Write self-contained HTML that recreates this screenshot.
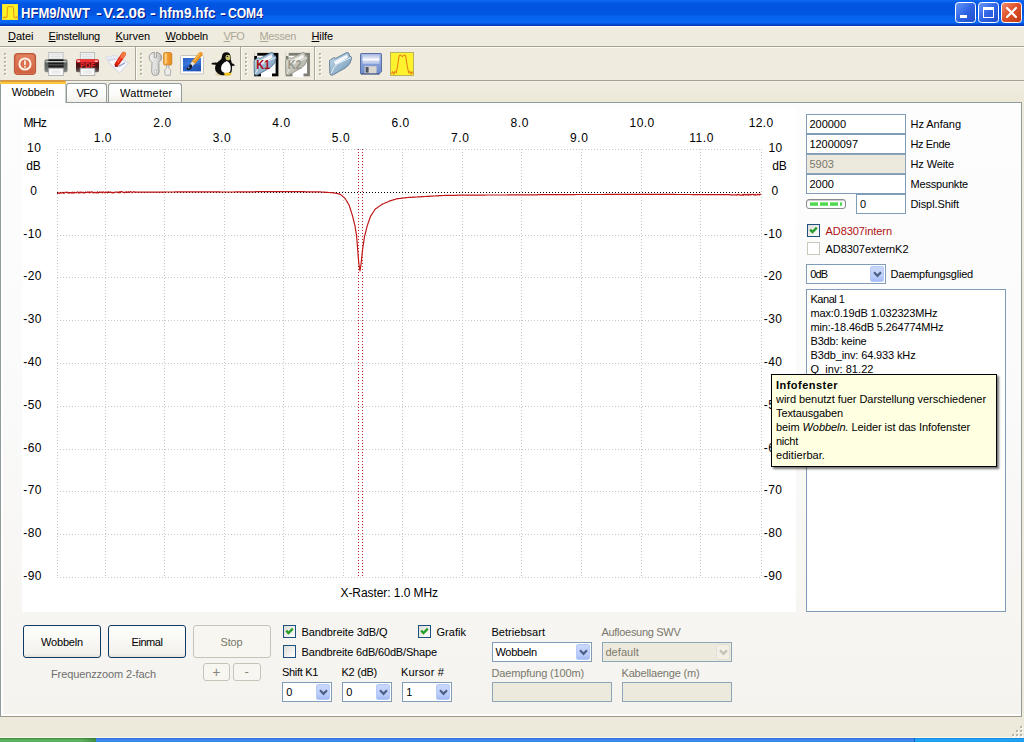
<!DOCTYPE html>
<html lang="de"><head><meta charset="utf-8"><title>HFM9/NWT</title>
<style>
html,body{margin:0;padding:0;}
body{width:1024px;height:742px;overflow:hidden;background:#ece9d8;font-family:'Liberation Sans',sans-serif;font-size:11px;}
#root{position:relative;width:1024px;height:742px;overflow:hidden;background:#edeadb;}
#root div,#root span,#root svg{position:absolute;box-sizing:border-box;}
.t{white-space:pre;line-height:14px;height:14px;}
.t u{text-decoration:underline;text-underline-offset:1px;}
#title{left:0;top:0;width:1024px;height:26px;background:linear-gradient(to bottom,#1369f4 0px,#0860ee 1.5px,#0257e4 3.5px,#0054e0 6px,#0055e2 14px,#0663f0 16.5px,#0766f3 22.5px,#0350d8 24px,#0038b4 25.5px,#0038b4 26px);}
.cb{width:13px;height:13px;border:1px solid #1c5180;background:linear-gradient(135deg,#dcdcd7,#fff);}
.cb.dis{border-color:#cac8bb;background:#fff;}
.edit{border:1px solid #7f9db9;background:#fff;}
.edit.dis{background:#ece9dd;border-color:#8ea4bb;}
.btn{border:1px solid #0f3a66;border-radius:3px;background:linear-gradient(to bottom,#fefefd 0%,#f8f7f3 50%,#f3f2ec 88%,#e6e3da 100%);}
.btn.dis{border-color:#c6c4b8;background:#f7f6f0;}
.arrow{border-radius:2px;background:linear-gradient(to bottom,#c9d8fc,#b9ccfb 70%,#a4baf4);border:1px solid #b7caf7;}

</style></head>
<body>
<div id="root">
<div id="title"></div>
<span class="t" style="left:20.8px;top:5.5px;font-size:14px;color:#fff;transform-origin:0 50%;transform:scaleX(0.932);font-weight:bold;text-shadow:1px 1px 0 #0a1883;">HFM9/NWT</span>
<span class="t" style="left:95.5px;top:5.5px;font-size:14px;color:#fff;transform-origin:0 50%;transform:scaleX(1.241);font-weight:bold;text-shadow:1px 1px 0 #0a1883;">-</span>
<span class="t" style="left:102.8px;top:5.5px;font-size:14px;color:#fff;transform-origin:0 50%;transform:scaleX(1.084);font-weight:bold;text-shadow:1px 1px 0 #0a1883;">V.2.06</span>
<span class="t" style="left:150.3px;top:5.5px;font-size:14px;color:#fff;transform-origin:0 50%;transform:scaleX(1.263);font-weight:bold;text-shadow:1px 1px 0 #0a1883;">-</span>
<span class="t" style="left:158.5px;top:5.5px;font-size:14px;color:#fff;transform-origin:0 50%;transform:scaleX(0.970);font-weight:bold;text-shadow:1px 1px 0 #0a1883;">hfm9.hfc</span>
<span class="t" style="left:220px;top:5.5px;font-size:14px;color:#fff;transform-origin:0 50%;transform:scaleX(1.263);font-weight:bold;text-shadow:1px 1px 0 #0a1883;">-</span>
<span class="t" style="left:228.2px;top:5.5px;font-size:14px;color:#fff;transform-origin:0 50%;transform:scaleX(0.863);font-weight:bold;text-shadow:1px 1px 0 #0a1883;">COM4</span>
<svg style="left:2px;top:4px" width="16" height="16" viewBox="0 0 16 16"><rect width="16" height="16" fill="#fdf224"/><rect x=".4" y=".4" width="15.2" height="15.2" fill="none" stroke="#f4dc3a" stroke-width=".8"/><path d="M1 14.2 L2.2 12.6 L3.2 14.2 L4.2 12.8 L5 13.6 L5.4 3.4 Q5.8 2.3 6.8 2.6 L8.5 2.9 L10.2 2.6 Q11.2 2.3 11.5 3.4 L12 13.6 L12.8 12.8 L13.8 14.2 L14.8 12.6 L15.4 14.2" fill="none" stroke="#e8921c" stroke-width="1"/></svg>
<svg style="left:955px;top:2px" width="21" height="21" viewBox="0 0 21 21"><defs><linearGradient id="gmin" x1="0" y1="0" x2="1" y2="1"><stop offset="0" stop-color="#6a9afa"/><stop offset=".5" stop-color="#2f64e6"/><stop offset="1" stop-color="#1f4cc8"/></linearGradient></defs><rect x=".5" y=".5" width="20" height="20" rx="3" fill="url(#gmin)" stroke="#fff" stroke-width="1"/><rect x="5" y="13" width="7" height="3" fill="#fff"/></svg><svg style="left:978px;top:2px" width="21" height="21" viewBox="0 0 21 21"><defs><linearGradient id="gmax" x1="0" y1="0" x2="1" y2="1"><stop offset="0" stop-color="#6a9afa"/><stop offset=".5" stop-color="#2f64e6"/><stop offset="1" stop-color="#1f4cc8"/></linearGradient></defs><rect x=".5" y=".5" width="20" height="20" rx="3" fill="url(#gmax)" stroke="#fff" stroke-width="1"/><rect x="5.5" y="6.5" width="10" height="9" fill="none" stroke="#fff" stroke-width="1"/><rect x="5" y="5" width="11" height="3" fill="#fff"/></svg><svg style="left:1001px;top:2px" width="21" height="21" viewBox="0 0 21 21"><defs><linearGradient id="gc" x1="0" y1="0" x2="1" y2="1"><stop offset="0" stop-color="#ee9274"/><stop offset=".45" stop-color="#e0532c"/><stop offset="1" stop-color="#bd3610"/></linearGradient></defs><rect x=".5" y=".5" width="20" height="20" rx="3" fill="url(#gc)" stroke="#fff" stroke-width="1"/><path d="M6 6 L15 15 M15 6 L6 15" stroke="#fff" stroke-width="2.2" stroke-linecap="round"/></svg>
<div style="left:0px;top:26px;width:1024px;height:20px;background:#efebde;border-top:1px solid #fff;"></div>
<span class="t" style="left:8px;top:29px;font-size:11px;color:#000;letter-spacing:-0.04px;"><u>D</u>atei</span>
<span class="t" style="left:48.5px;top:29px;font-size:11px;color:#000;letter-spacing:-0.21px;"><u>E</u>instellung</span>
<span class="t" style="left:115.5px;top:29px;font-size:11px;color:#000;letter-spacing:-0.06px;"><u>K</u>urven</span>
<span class="t" style="left:165.5px;top:29px;font-size:11px;color:#000;letter-spacing:-0.10px;"><u>W</u>obbeln</span>
<span class="t" style="left:223.5px;top:29px;font-size:11px;color:#aca899;letter-spacing:-0.71px;"><u>V</u>FO</span>
<span class="t" style="left:259.5px;top:29px;font-size:11px;color:#aca899;letter-spacing:-0.34px;"><u>M</u>essen</span>
<span class="t" style="left:311.5px;top:29px;font-size:11px;color:#000;letter-spacing:-0.10px;"><u>H</u>ilfe</span>
<div style="left:0px;top:46px;width:1024px;height:1px;background:#a5a293;"></div>
<div style="left:0px;top:47px;width:1024px;height:33px;background:#efebde;border-top:1px solid #fbfaf4;"></div>
<div style="left:0px;top:80px;width:1024px;height:1px;background:#a5a293;"></div>
<svg style="left:0;top:0" width="430" height="82" viewBox="0 0 430 82"><defs><linearGradient id="pw" x1="0" y1="0" x2="0" y2="1"><stop offset="0" stop-color="#e0805e"/><stop offset="1" stop-color="#cf5f40"/></linearGradient><linearGradient id="prb" x1="0" y1="0" x2="0" y2="1"><stop offset="0" stop-color="#8a8c8a"/><stop offset=".3" stop-color="#5c5f5d"/><stop offset=".7" stop-color="#6c6f6d"/><stop offset="1" stop-color="#8a8d8a"/></linearGradient><linearGradient id="prr" x1="0" y1="0" x2="0" y2="1"><stop offset="0" stop-color="#c01820"/><stop offset=".3" stop-color="#5a0c10"/><stop offset=".6" stop-color="#4a1416"/><stop offset="1" stop-color="#6a6a6a"/></linearGradient><linearGradient id="fo" x1="0" y1="0" x2="1" y2="1"><stop offset="0" stop-color="#c6dbea"/><stop offset="1" stop-color="#6f95b6"/></linearGradient><linearGradient id="fog" x1="0" y1="0" x2="1" y2="1"><stop offset="0" stop-color="#e2e1d8"/><stop offset="1" stop-color="#a9a89d"/></linearGradient><linearGradient id="fl" x1="0" y1="0" x2="0" y2="1"><stop offset="0" stop-color="#9db4e6"/><stop offset="1" stop-color="#6c8acb"/></linearGradient><linearGradient id="pic" x1="0" y1="0" x2="1" y2="1"><stop offset="0" stop-color="#2a5fc6"/><stop offset=".5" stop-color="#3f7fe0"/><stop offset="1" stop-color="#1c4aa8"/></linearGradient><linearGradient id="og" x1="0" y1="0" x2="1" y2="0"><stop offset="0" stop-color="#f9b44a"/><stop offset="1" stop-color="#e8861a"/></linearGradient><linearGradient id="wr" x1="0" y1="0" x2="1" y2="0"><stop offset="0" stop-color="#f2f2f0"/><stop offset=".6" stop-color="#dcdcda"/><stop offset="1" stop-color="#b4b4b2"/></linearGradient><linearGradient id="fll" x1="0" y1="0" x2="0" y2="1"><stop offset="0" stop-color="#aebde0"/><stop offset=".45" stop-color="#e6ebf8"/><stop offset=".7" stop-color="#c9d4ee"/><stop offset="1" stop-color="#b7c6ea"/></linearGradient></defs><rect x="4.9" y="53.9" width="1.8" height="1.8" fill="#fff"/><rect x="4" y="53" width="1.8" height="1.8" fill="#aeab9a"/><rect x="4.9" y="57.9" width="1.8" height="1.8" fill="#fff"/><rect x="4" y="57" width="1.8" height="1.8" fill="#aeab9a"/><rect x="4.9" y="61.9" width="1.8" height="1.8" fill="#fff"/><rect x="4" y="61" width="1.8" height="1.8" fill="#aeab9a"/><rect x="4.9" y="65.9" width="1.8" height="1.8" fill="#fff"/><rect x="4" y="65" width="1.8" height="1.8" fill="#aeab9a"/><rect x="4.9" y="69.9" width="1.8" height="1.8" fill="#fff"/><rect x="4" y="69" width="1.8" height="1.8" fill="#aeab9a"/><rect x="4.9" y="73.9" width="1.8" height="1.8" fill="#fff"/><rect x="4" y="73" width="1.8" height="1.8" fill="#aeab9a"/><rect x="140.9" y="53.9" width="1.8" height="1.8" fill="#fff"/><rect x="140" y="53" width="1.8" height="1.8" fill="#aeab9a"/><rect x="140.9" y="57.9" width="1.8" height="1.8" fill="#fff"/><rect x="140" y="57" width="1.8" height="1.8" fill="#aeab9a"/><rect x="140.9" y="61.9" width="1.8" height="1.8" fill="#fff"/><rect x="140" y="61" width="1.8" height="1.8" fill="#aeab9a"/><rect x="140.9" y="65.9" width="1.8" height="1.8" fill="#fff"/><rect x="140" y="65" width="1.8" height="1.8" fill="#aeab9a"/><rect x="140.9" y="69.9" width="1.8" height="1.8" fill="#fff"/><rect x="140" y="69" width="1.8" height="1.8" fill="#aeab9a"/><rect x="140.9" y="73.9" width="1.8" height="1.8" fill="#fff"/><rect x="140" y="73" width="1.8" height="1.8" fill="#aeab9a"/><rect x="245.9" y="53.9" width="1.8" height="1.8" fill="#fff"/><rect x="245" y="53" width="1.8" height="1.8" fill="#aeab9a"/><rect x="245.9" y="57.9" width="1.8" height="1.8" fill="#fff"/><rect x="245" y="57" width="1.8" height="1.8" fill="#aeab9a"/><rect x="245.9" y="61.9" width="1.8" height="1.8" fill="#fff"/><rect x="245" y="61" width="1.8" height="1.8" fill="#aeab9a"/><rect x="245.9" y="65.9" width="1.8" height="1.8" fill="#fff"/><rect x="245" y="65" width="1.8" height="1.8" fill="#aeab9a"/><rect x="245.9" y="69.9" width="1.8" height="1.8" fill="#fff"/><rect x="245" y="69" width="1.8" height="1.8" fill="#aeab9a"/><rect x="245.9" y="73.9" width="1.8" height="1.8" fill="#fff"/><rect x="245" y="73" width="1.8" height="1.8" fill="#aeab9a"/><rect x="319.9" y="53.9" width="1.8" height="1.8" fill="#fff"/><rect x="319" y="53" width="1.8" height="1.8" fill="#aeab9a"/><rect x="319.9" y="57.9" width="1.8" height="1.8" fill="#fff"/><rect x="319" y="57" width="1.8" height="1.8" fill="#aeab9a"/><rect x="319.9" y="61.9" width="1.8" height="1.8" fill="#fff"/><rect x="319" y="61" width="1.8" height="1.8" fill="#aeab9a"/><rect x="319.9" y="65.9" width="1.8" height="1.8" fill="#fff"/><rect x="319" y="65" width="1.8" height="1.8" fill="#aeab9a"/><rect x="319.9" y="69.9" width="1.8" height="1.8" fill="#fff"/><rect x="319" y="69" width="1.8" height="1.8" fill="#aeab9a"/><rect x="319.9" y="73.9" width="1.8" height="1.8" fill="#fff"/><rect x="319" y="73" width="1.8" height="1.8" fill="#aeab9a"/><rect x="135" y="47" width="1" height="33" fill="#aca899"/><rect x="136" y="47" width="1" height="33" fill="#fbfaf5"/><rect x="240" y="47" width="1" height="33" fill="#aca899"/><rect x="241" y="47" width="1" height="33" fill="#fbfaf5"/><rect x="314" y="47" width="1" height="33" fill="#aca899"/><rect x="315" y="47" width="1" height="33" fill="#fbfaf5"/><rect x="14.5" y="53.5" width="21" height="21" rx="3.5" fill="#d9714f" stroke="#b8583c" stroke-width="1.2"/><rect x="16" y="55" width="18" height="18" rx="2.5" fill="url(#pw)"/><circle cx="25" cy="64" r="5.6" fill="#d96f4e" stroke="#fff1e4" stroke-width="2"/><rect x="24.1" y="60.3" width="1.8" height="5" rx=".7" fill="#fff1e4"/><rect x="24.1" y="66" width="1.8" height="1.7" rx=".6" fill="#fff1e4"/><rect x="48.8" y="52.4" width="14.2" height="9" fill="#eff0f2" stroke="#b4b4b4" stroke-width=".8"/><path d="M50.8 54.6h10M50.8 56.6h10M50.8 58.6h10" stroke="#d4d6da" stroke-width=".7"/><rect x="44.5" y="59.2" width="23" height="13" rx="1.6" fill="url(#prb)"/><rect x="48.5" y="59.4" width="15" height="1.6" fill="#101110"/><rect x="45.5" y="61" width="21" height="1.3" fill="#c4c6c4"/><rect x="48.3" y="62.6" width="15.4" height="5" fill="#1a1c1b"/><rect x="48.3" y="64.4" width="15.4" height=".9" fill="#6a6c6a"/><rect x="48.7" y="68.2" width="14.6" height="7.2" fill="#fafafa" stroke="#a4a4a4" stroke-width=".8"/><path d="M51.7 71h8.6M51.7 73h8.6" stroke="#d8d8dc" stroke-width=".8"/><rect x="80.3" y="52.4" width="14.2" height="9" fill="#eff0f2" stroke="#b4b4b4" stroke-width=".8"/><path d="M82.3 54.6h10M82.3 56.6h10M82.3 58.6h10" stroke="#d4d6da" stroke-width=".7"/><rect x="76" y="59.2" width="23" height="13" rx="1.6" fill="url(#prr)"/><rect x="76.5" y="59.6" width="22" height="2.8" rx="1" fill="#f23434"/><rect x="77.1" y="60.4" width="3" height="1.4" fill="#ffd0d0"/><rect x="94.9" y="60.4" width="3" height="1.4" fill="#ffd0d0"/><text x="80" y="68.2" font-family="'Liberation Sans',sans-serif" font-weight="bold" font-size="7.6" fill="#f02a2a" textLength="15" lengthAdjust="spacingAndGlyphs">PDF</text><rect x="80.2" y="68.2" width="14.6" height="7.2" fill="#fafafa" stroke="#a4a4a4" stroke-width=".8"/><path d="M83.2 71h8.6M83.2 73h8.6" stroke="#d8d8dc" stroke-width=".8"/><path d="M105.4 57.2 L115 55.4 L125.6 61.6 L115.6 69.8 Z" fill="#eef0f8" stroke="#d3d6e2" stroke-width=".8"/><path d="M107.5 61 L119.6 58.4 L128.6 63 L119.6 73 Z" fill="#f7f8fe" stroke="#c9cde0" stroke-width=".8"/><path d="M108.6 58.4l2 2.6M111 57.8l2 2.6M113.4 57.4l2 2.6" stroke="#c6cadb" stroke-width=".9"/><path d="M123.8 54 L116.8 64.2" stroke="#df2412" stroke-width="4.4" stroke-linecap="round"/><path d="M124.2 53.6 L122.2 56.6" stroke="#f2803e" stroke-width="3.6" stroke-linecap="round"/><path d="M122.6 55.2 L118 62" stroke="#ff6a50" stroke-width="1.1" stroke-linecap="round"/><path d="M114.6 64 L115 67 L118.6 66.4 Z" fill="#8c1a12"/><path d="M119.4 66.2 L124.4 63.2" stroke="#9aa6c8" stroke-width="1.5" stroke-linecap="round"/><path d="M154.4 52.3 Q149.2 53.2 149.2 57.6 Q149.4 60.8 152 62.4 L151.7 72 Q151.8 75.5 155.4 75.5 Q159 75.5 159.1 72 L158.8 62.4 Q161.4 60.8 161.6 57.6 Q161.6 53.2 156.4 52.3 L156.6 57.2 Q155.4 58.2 154.2 57.2 Z" fill="url(#wr)" stroke="#8a8a88" stroke-width=".8"/><ellipse cx="155.4" cy="71.4" rx="1.2" ry="1.7" fill="#fafafa" stroke="#8d8d8b" stroke-width=".5"/><rect x="163.5" y="52.5" width="8.3" height="12.6" rx="1.6" fill="url(#og)" stroke="#c4781e" stroke-width=".7"/><rect x="165" y="53.6" width="1.8" height="10" rx=".9" fill="#fbcf80"/><path d="M166.7 65.2 L168.7 65.2 L168.8 68.2 L170.8 70 L170.2 75.3 L165.2 75.3 L164.6 70 L166.6 68.2 Z" fill="#ececea" stroke="#979795" stroke-width=".7"/><rect x="180.5" y="55.5" width="23" height="18.5" rx="1" fill="#fdfdfd" stroke="#bfbfba" stroke-width=".9"/><rect x="183" y="58" width="18" height="13.2" fill="url(#pic)"/><path d="M183 67 Q190 62 201 65.5 L201 71.2 L183 71.2 Z" fill="#2255ba" opacity=".65"/><path d="M200.6 54.2 L193.4 62.6" stroke="#e8921c" stroke-width="4.2" stroke-linecap="round"/><path d="M200.2 53.6 L194.2 60.6" stroke="#f8c062" stroke-width="1.2" stroke-linecap="round"/><path d="M193.6 62.4 L191 65.6" stroke="#e2e2e2" stroke-width="3.2"/><path d="M192 65 Q192.6 69.4 188.6 70 Q186.2 70 186.8 67.8 Q189.4 67.6 190 64 Z" fill="#161c2a"/><circle cx="188.8" cy="67.8" r=".8" fill="#8fa8d8"/><ellipse cx="222.5" cy="74.4" rx="7.5" ry="1.6" fill="#d9c68a" opacity=".7"/><path d="M226.4 52.2 Q230.6 52.4 230.6 57 Q230.6 60 231.6 62 Q232.6 66 231.8 71 L230.6 73.6 Q226 75.6 221 75 Q215.6 73.6 215 68.6 Q214.8 63.6 219.6 60.4 Q222 58.6 222 56.4 Q222.4 52.2 226.4 52.2 Z" fill="#0c0c0c"/><path d="M211.6 63 Q216 61.8 220 63.4 L218.6 65.8 Q214.6 64.4 211.8 64.6 Z" fill="#0c0c0c"/><path d="M230.8 63 Q233.8 63.4 235.2 65.4 Q233.4 65.6 231.4 66 Z" fill="#0c0c0c"/><path d="M226.8 61 Q230.4 62.6 230.8 68 Q230.8 72.6 227.4 73.4 Q221.4 73.4 221 68.6 Q220.8 63.6 226.8 61 Z" fill="#fbfbfb"/><path d="M226 55.2 Q228.4 54.2 230 55.6 L230.2 59.4 Q228 61 225.8 59.6 Q224.8 57.2 226 55.2 Z" fill="#c9c466"/><circle cx="227.4" cy="56.4" r=".7" fill="#222"/><path d="M223.6 73.6 Q227.6 71.6 231.4 73 Q231.6 75.4 228.2 75.8 Q224.6 76 223.6 73.6 Z" fill="#f1c11c"/><rect x="255.6" y="54.3" width="21.4" height="20.6" fill="#fff" stroke="#050505" stroke-width="2.8"/><rect x="261" y="70" width="11" height="7" fill="#fff"/><rect x="254.2" y="52" width="3" height="4" fill="#efebde"/><g transform="translate(-75.5 0)"><path d="M329.5 60.5 L333.5 57.8 L336 58.2 L346.5 52.6 Q349 52.2 349.2 54.2 L349.6 56 Q351.6 56.2 351.6 58.4 Q350.5 64.5 346 67.5 L332.5 75.2 Q330 75.8 329.8 73 Z" fill="url(#fo)" stroke="#4f6f8c" stroke-width=".8"/><path d="M334 61.5 L347 54.4 L348 57.4 L335.5 65 Z" fill="#f4f8fc"/><path d="M331 73.5 Q334 66 337.5 63.8 L351 57.6" fill="none" stroke="#e4eef6" stroke-width="1"/></g><text x="256.2" y="69" font-family="'Liberation Sans',sans-serif" font-weight="bold" font-size="12" fill="#a80f22" textLength="14" lengthAdjust="spacingAndGlyphs">K1</text><rect x="287.1" y="54.3" width="21.4" height="20.6" fill="#fff" stroke="#7f7e74" stroke-width="2.8"/><rect x="292.5" y="70" width="11" height="7" fill="#fff"/><rect x="285.7" y="52" width="3" height="4" fill="#efebde"/><g transform="translate(-44 0)"><path d="M329.5 60.5 L333.5 57.8 L336 58.2 L346.5 52.6 Q349 52.2 349.2 54.2 L349.6 56 Q351.6 56.2 351.6 58.4 Q350.5 64.5 346 67.5 L332.5 75.2 Q330 75.8 329.8 73 Z" fill="url(#fog)" stroke="#8d8c82" stroke-width=".8"/><path d="M334 61.5 L347 54.4 L348 57.4 L335.5 65 Z" fill="#f3f2ec"/><path d="M331 73.5 Q334 66 337.5 63.8 L351 57.6" fill="none" stroke="#e9e8e0" stroke-width="1"/></g><text x="287.7" y="69" font-family="'Liberation Sans',sans-serif" font-weight="bold" font-size="12" fill="#98978d" textLength="14" lengthAdjust="spacingAndGlyphs">K2</text><path d="M329.5 60.5 L333.5 57.8 L336 58.2 L346.5 52.6 Q349 52.2 349.2 54.2 L349.6 56 Q351.6 56.2 351.6 58.4 Q350.5 64.5 346 67.5 L332.5 75.2 Q330 75.8 329.8 73 Z" fill="url(#fo)" stroke="#4f6f8c" stroke-width=".8"/><path d="M334 61.5 L347 54.4 L348 57.4 L335.5 65 Z" fill="#f4f8fc"/><path d="M331 73.5 Q334 66 337.5 63.8 L351 57.6" fill="none" stroke="#e4eef6" stroke-width="1"/><path d="M361.2 53.5 L380.8 53.5 Q381.5 53.5 381.5 54.2 L381.5 71.6 L379.4 73.8 L361.2 73.8 Q360.5 73.8 360.5 73.1 L360.5 54.2 Q360.5 53.5 361.2 53.5 Z" fill="url(#fl)" stroke="#50669a" stroke-width=".9"/><path d="M360.9 74 L379.5 74" stroke="#3f4f78" stroke-width="1"/><rect x="362.6" y="54.4" width="16.8" height="9.4" fill="url(#fll)"/><rect x="362.6" y="58.8" width="16.8" height="1.7" fill="#fbfcff"/><rect x="364.6" y="66.2" width="12" height="7" fill="#d9d6cf"/><rect x="365.6" y="67" width="3" height="5.6" fill="#4d5568"/><rect x="390.5" y="52.5" width="23" height="23" fill="#fef22c" stroke="#b4ae5c" stroke-width=".9"/><path d="M391.4 73.8 L392.6 71.8 L393.8 74 L395 71.4 L396.2 72.6 L397.4 67 L399 56.6 Q399.8 54.6 401 55.4 L402.4 56.6 L403.8 55.4 Q405 54.6 405.8 56.6 L407.4 67 L408.6 72.6 L409.8 71.4 L411 74 L412.2 71.8 L413.4 73.8" fill="none" stroke="#e58618" stroke-width="1.1"/></svg>
<div style="left:0px;top:81px;width:1024px;height:22px;background:linear-gradient(to bottom,#f7f5ec 0,#f0ecdf 1px,#efebde 8px,#ece9d8 20px);"></div>
<div style="left:0px;top:102px;width:1022px;height:615px;border:1px solid #919b9c;border-bottom-color:#9d9a8c;background:linear-gradient(to bottom,#fdfdfe 0%,#fbfbfc 40%,#f7f6f3 80%,#f4f3ee 100%);box-shadow:inset 2px -2px 0 0 rgba(255,255,255,.9);"></div>
<div style="left:66px;top:83px;width:41px;height:19px;border:1px solid #919b9c;border-bottom:none;border-radius:3px 3px 0 0;background:linear-gradient(to bottom,#fff 0%,#fbfbf9 60%,#f0efe8 100%);"></div>
<span class="t" style="left:76.5px;top:86.2px;font-size:11px;color:#000;letter-spacing:-0.54px;">VFO</span>
<div style="left:108px;top:83px;width:74px;height:19px;border:1px solid #919b9c;border-bottom:none;border-radius:3px 3px 0 0;background:linear-gradient(to bottom,#fff 0%,#fbfbf9 60%,#f0efe8 100%);"></div>
<span class="t" style="left:120px;top:86.2px;font-size:11px;color:#000;letter-spacing:0.24px;">Wattmeter</span>
<div style="left:0px;top:81px;width:66px;height:22px;border-left:1px solid #919b9c;border-right:1px solid #c9cdc8;border-radius:3px 3px 0 0;background:#fefefe;"></div>
<div style="left:0px;top:80px;width:66px;height:4px;border-radius:3px 3px 0 0;background:linear-gradient(to bottom,#d49a45 0,#dc9a3a 1.5px,#ffc83c 2px,#ffc83c 4px);"></div>
<span class="t" style="left:11.7px;top:85.1px;font-size:11px;color:#000;letter-spacing:-0.10px;">Wobbeln</span>
<svg style="left:22px;top:108px" width="774" height="504" viewBox="22 108 774 504" shape-rendering="crispEdges"><rect x="22" y="108" width="774" height="504" fill="#fff"/><path d="M57 149.5H762M57 192.5H762M57 235.5H762M57 277.5H762M57 320.5H762M57 363.5H762M57 406.5H762M57 449.5H762M57 491.5H762M57 534.5H762M57 577.5H762M57.5 149V578M761.5 149V578M105.5 149V578M164.5 149V578M224.5 149V578M283.5 149V578M343.5 149V578M402.5 149V578M462.5 149V578M521.5 149V578M581.5 149V578M641.5 149V578M700.5 149V578" fill="none" stroke="#c8c8c8" stroke-width="1" stroke-dasharray="1 2"/><path d="M57 192.5H762" fill="none" stroke="#000" stroke-width="1" stroke-dasharray="1 2"/><path d="M358.5 149V578M362.5 149V578" fill="none" stroke="#c82020" stroke-width="1" stroke-dasharray="1 2"/></svg>
<svg style="left:22px;top:108px" width="774" height="504" viewBox="22 108 774 504"><path d="M57.0 193.4 L57.5 193.4 L58.0 193.4 L58.5 192.9 L59.0 192.9 L59.5 193.4 L60.0 192.8 L60.5 192.3 L61.0 193.3 L61.5 192.8 L62.0 192.8 L62.5 192.3 L63.0 192.3 L63.5 193.3 L64.0 193.3 L64.5 192.8 L65.0 192.3 L65.5 192.3 L66.0 192.3 L66.5 192.2 L67.0 192.7 L67.5 192.7 L68.0 192.2 L68.5 193.2 L69.0 192.7 L69.5 193.2 L70.0 192.7 L70.5 192.7 L71.0 192.7 L71.5 193.2 L72.0 192.2 L72.5 192.2 L73.0 193.2 L73.5 192.7 L74.0 193.2 L74.5 192.2 L75.0 192.7 L75.5 192.7 L76.0 192.6 L76.5 192.6 L77.0 192.1 L77.5 192.1 L78.0 192.1 L78.5 193.1 L79.0 192.1 L79.5 192.6 L80.0 193.1 L80.5 192.1 L81.0 192.1 L81.5 192.1 L82.0 192.6 L82.5 192.6 L83.0 192.1 L83.5 193.0 L84.0 193.0 L84.5 193.0 L85.0 193.0 L85.5 192.0 L86.0 192.5 L86.5 192.5 L87.0 192.5 L87.5 192.0 L88.0 192.5 L88.5 192.5 L89.0 192.0 L89.5 193.0 L90.0 191.9 L90.5 192.4 L91.0 192.4 L91.5 191.9 L92.0 191.9 L92.5 191.9 L93.0 192.9 L93.5 192.9 L94.0 192.4 L94.5 192.4 L95.0 192.9 L95.5 192.4 L96.0 192.4 L96.5 192.9 L97.0 192.8 L97.5 191.8 L98.0 192.8 L98.5 192.8 L99.0 192.3 L99.5 191.8 L100.0 192.3 L100.5 192.3 L101.0 191.8 L101.5 192.3 L102.0 192.3 L102.5 192.8 L103.0 191.8 L103.5 191.8 L104.0 192.3 L104.5 192.3 L105.0 192.8 L105.5 192.3 L106.0 191.8 L106.5 192.3 L107.0 192.3 L107.5 192.8 L108.0 191.8 L108.5 191.8 L109.0 191.8 L109.5 192.3 L110.0 192.3 L110.5 191.8 L111.0 192.3 L111.5 192.3 L112.0 192.8 L112.5 192.3 L113.0 192.8 L113.5 192.3 L114.0 192.8 L114.5 192.3 L115.0 192.2 L115.5 192.2 L116.0 192.2 L116.5 192.2 L117.0 192.2 L117.5 192.2 L118.0 192.2 L118.5 192.7 L119.0 192.7 L119.5 191.7 L120.0 192.7 L120.5 191.7 L121.0 191.7 L121.5 191.7 L122.0 191.7 L122.5 192.2 L123.0 192.2 L123.5 192.7 L124.0 192.2 L124.5 192.7 L125.0 192.7 L125.5 192.2 L126.0 192.2 L126.5 191.7 L127.0 192.2 L127.5 192.2 L128.0 192.7 L128.5 191.7 L129.0 192.2 L129.5 192.2 L130.0 192.2 L130.5 191.7 L131.0 191.7 L131.5 192.2 L132.0 192.7 L132.5 192.7 L133.0 192.2 L133.5 191.7 L134.0 191.7 L134.5 192.2 L135.0 192.2 L135.5 192.2 L136.0 192.2 L136.5 192.2 L137.0 192.2 L137.5 192.2 L138.0 192.2 L138.5 192.2 L139.0 192.2 L139.5 192.2 L140.0 192.2 L140.5 192.2 L141.0 192.2 L141.5 192.2 L142.0 192.2 L142.5 192.2 L143.0 192.2 L143.5 192.2 L144.0 192.2 L144.5 192.2 L145.0 192.1 L145.5 192.1 L146.0 192.1 L146.5 192.1 L147.0 192.1 L147.5 192.1 L148.0 192.1 L148.5 192.1 L149.0 192.1 L149.5 192.1 L150.0 192.1 L150.5 192.1 L151.0 192.1 L151.5 192.1 L152.0 192.1 L152.5 192.1 L153.0 192.1 L153.5 192.1 L154.0 192.1 L154.5 192.1 L155.0 192.1 L155.5 192.1 L156.0 192.1 L156.5 192.1 L157.0 192.1 L157.5 192.1 L158.0 192.1 L158.5 192.1 L159.0 192.1 L159.5 192.1 L160.0 192.1 L160.5 192.1 L161.0 192.1 L161.5 192.1 L162.0 192.1 L162.5 192.1 L163.0 192.1 L163.5 192.1 L164.0 192.1 L164.5 192.1 L165.0 192.1 L165.5 192.0 L166.0 192.0 L166.5 192.0 L167.0 192.0 L167.5 192.0 L168.0 192.0 L168.5 192.0 L169.0 192.0 L169.5 192.0 L170.0 192.0 L170.5 192.0 L171.0 192.0 L171.5 192.0 L172.0 192.0 L172.5 192.0 L173.0 192.0 L173.5 192.0 L174.0 192.0 L174.5 192.0 L175.0 191.9 L175.5 191.9 L176.0 191.9 L176.5 191.9 L177.0 191.9 L177.5 191.9 L178.0 191.9 L178.5 191.9 L179.0 191.9 L179.5 191.9 L180.0 191.9 L180.5 191.9 L181.0 191.9 L181.5 191.9 L182.0 191.9 L182.5 191.9 L183.0 191.9 L183.5 191.9 L184.0 191.9 L184.5 191.9 L185.0 191.9 L185.5 191.8 L186.0 191.8 L186.5 191.8 L187.0 191.8 L187.5 191.8 L188.0 191.8 L188.5 191.8 L189.0 191.8 L189.5 191.8 L190.0 191.8 L190.5 191.8 L191.0 191.8 L191.5 191.8 L192.0 191.8 L192.5 191.8 L193.0 191.8 L193.5 191.8 L194.0 191.8 L194.5 191.8 L195.0 191.8 L195.5 191.8 L196.0 191.8 L196.5 191.8 L197.0 191.8 L197.5 191.8 L198.0 191.8 L198.5 191.8 L199.0 191.8 L199.5 191.8 L200.0 191.9 L200.5 191.9 L201.0 191.9 L201.5 191.9 L202.0 191.9 L202.5 191.9 L203.0 191.9 L203.5 191.9 L204.0 191.9 L204.5 191.9 L205.0 191.9 L205.5 191.9 L206.0 191.9 L206.5 191.9 L207.0 191.9 L207.5 191.9 L208.0 191.9 L208.5 191.9 L209.0 191.9 L209.5 191.9 L210.0 191.9 L210.5 191.9 L211.0 191.9 L211.5 191.9 L212.0 191.9 L212.5 191.9 L213.0 191.9 L213.5 191.9 L214.0 191.9 L214.5 191.9 L215.0 191.9 L215.5 191.9 L216.0 191.9 L216.5 191.9 L217.0 191.9 L217.5 191.9 L218.0 191.9 L218.5 191.9 L219.0 191.9 L219.5 191.9 L220.0 191.9 L220.5 192.0 L221.0 192.0 L221.5 192.0 L222.0 192.0 L222.5 192.0 L223.0 192.0 L223.5 192.0 L224.0 192.0 L224.5 192.0 L225.0 192.0 L225.5 192.0 L226.0 192.0 L226.5 192.0 L227.0 192.0 L227.5 192.0 L228.0 192.0 L228.5 192.0 L229.0 192.0 L229.5 192.0 L230.0 192.0 L230.5 192.0 L231.0 192.0 L231.5 192.0 L232.0 192.0 L232.5 192.0 L233.0 192.0 L233.5 192.0 L234.0 192.0 L234.5 192.0 L235.0 191.9 L235.5 191.9 L236.0 191.9 L236.5 191.9 L237.0 191.9 L237.5 191.9 L238.0 191.9 L238.5 191.9 L239.0 191.9 L239.5 191.9 L240.0 191.9 L240.5 191.9 L241.0 191.9 L241.5 191.9 L242.0 191.9 L242.5 191.9 L243.0 191.9 L243.5 191.9 L244.0 191.9 L244.5 191.9 L245.0 191.8 L245.5 191.8 L246.0 191.8 L246.5 191.8 L247.0 191.8 L247.5 191.8 L248.0 191.8 L248.5 191.8 L249.0 191.8 L249.5 191.8 L250.0 191.8 L250.5 191.8 L251.0 191.8 L251.5 191.8 L252.0 191.8 L252.5 191.8 L253.0 191.8 L253.5 191.8 L254.0 191.8 L254.5 191.8 L255.0 191.8 L255.5 191.7 L256.0 191.7 L256.5 191.7 L257.0 191.7 L257.5 191.7 L258.0 191.7 L258.5 191.7 L259.0 191.7 L259.5 191.7 L260.0 191.7 L260.5 191.7 L261.0 191.7 L261.5 191.7 L262.0 191.7 L262.5 191.7 L263.0 191.7 L263.5 191.7 L264.0 191.7 L264.5 191.7 L265.0 191.7 L265.5 191.6 L266.0 191.6 L266.5 191.6 L267.0 191.6 L267.5 191.6 L268.0 191.6 L268.5 191.6 L269.0 191.6 L269.5 191.6 L270.0 191.6 L270.5 191.6 L271.0 191.6 L271.5 191.6 L272.0 191.6 L272.5 191.6 L273.0 191.6 L273.5 191.6 L274.0 191.6 L274.5 191.6 L275.0 191.6 L275.5 191.6 L276.0 191.6 L276.5 191.6 L277.0 191.6 L277.5 191.6 L278.0 191.6 L278.5 191.6 L279.0 191.6 L279.5 191.6 L280.0 191.6 L280.5 191.6 L281.0 191.6 L281.5 191.6 L282.0 191.6 L282.5 191.6 L283.0 191.6 L283.5 191.6 L284.0 191.6 L284.5 191.6 L285.0 191.6 L285.5 191.7 L286.0 191.7 L286.5 191.7 L287.0 191.7 L287.5 191.7 L288.0 191.7 L288.5 191.7 L289.0 191.7 L289.5 191.7 L290.0 191.7 L290.5 191.7 L291.0 191.7 L291.5 191.7 L292.0 191.7 L292.5 191.7 L293.0 191.7 L293.5 191.7 L294.0 191.7 L294.5 191.7 L295.0 191.7 L295.5 191.7 L296.0 191.7 L296.5 191.7 L297.0 191.7 L297.5 191.7 L298.0 191.7 L298.5 191.7 L299.0 191.7 L299.5 191.7 L300.0 191.7 L300.5 191.7 L301.0 191.7 L301.5 191.7 L302.0 191.7 L302.5 191.7 L303.0 191.7 L303.5 191.7 L304.0 191.7 L304.5 191.7 L305.0 191.8 L305.5 191.8 L306.0 191.8 L306.5 191.8 L307.0 191.8 L307.5 191.8 L308.0 191.8 L308.5 191.8 L309.0 191.8 L309.5 191.8 L310.0 191.8 L310.5 191.8 L311.0 191.8 L311.5 191.8 L312.0 191.8 L312.5 191.8 L313.0 191.8 L313.5 191.8 L314.0 191.8 L314.5 191.8 L315.0 191.8 L315.5 191.9 L316.0 191.9 L316.5 191.9 L317.0 191.9 L317.5 191.9 L318.0 191.9 L318.5 191.9 L319.0 191.9 L319.5 191.9 L320.0 191.9 L320.5 191.9 L321.0 192.0 L321.5 192.0 L322.0 192.0 L322.5 192.1 L323.0 192.1 L323.5 192.1 L324.0 192.2 L324.5 192.2 L325.0 192.2 L325.5 192.3 L326.0 192.3 L326.5 192.3 L327.0 192.4 L327.5 192.4 L328.0 192.4 L328.5 192.5 L329.0 192.5 L329.5 192.5 L330.0 192.6 L330.5 192.6 L331.0 192.6 L331.5 192.7 L332.0 192.7 L332.5 192.7 L333.0 192.8 L333.5 192.8 L334.0 192.9 L334.5 193.0 L335.0 193.1 L335.5 193.2 L336.0 193.3 L336.5 193.4 L337.0 193.5 L337.5 193.6 L338.0 193.7 L338.5 193.8 L339.0 193.9 L339.5 194.1 L340.0 194.2 L340.5 194.5 L341.0 194.9 L341.5 195.3 L342.0 195.7 L342.5 196.2 L343.0 196.6 L343.5 197.0 L344.0 197.4 L344.5 197.9 L345.0 198.4 L345.5 199.2 L346.0 200.0 L346.5 200.8 L347.0 201.6 L347.5 202.4 L348.0 203.3 L348.5 204.1 L349.0 204.9 L349.5 206.4 L350.0 208.0 L350.5 209.5 L351.0 211.0 L351.5 212.6 L352.0 214.1 L352.5 215.8 L353.0 217.8 L353.5 219.8 L354.0 221.8 L354.5 223.8 L355.0 225.8 L355.5 229.0 L356.0 232.2 L356.5 235.3 L357.0 240.6 L357.5 247.3 L358.0 253.7 L358.5 259.9 L359.0 264.8 L359.5 267.8 L360.0 270.8 L360.5 267.5 L361.0 264.3 L361.5 259.7 L362.0 254.9 L362.5 250.0 L363.0 246.7 L363.5 243.3 L364.0 239.9 L364.5 236.6 L365.0 234.6 L365.5 232.6 L366.0 230.6 L366.5 228.6 L367.0 226.6 L367.5 224.9 L368.0 223.5 L368.5 222.1 L369.0 220.7 L369.5 219.2 L370.0 217.8 L370.5 216.4 L371.0 215.6 L371.5 214.9 L372.0 214.1 L372.5 213.3 L373.0 212.5 L373.5 211.8 L374.0 211.0 L374.5 210.2 L375.0 209.5 L375.5 208.9 L376.0 208.5 L376.5 208.2 L377.0 207.8 L377.5 207.5 L378.0 207.1 L378.5 206.8 L379.0 206.4 L379.5 206.1 L380.0 205.7 L380.5 205.4 L381.0 205.0 L381.5 204.7 L382.0 204.3 L382.5 204.1 L383.0 203.9 L383.5 203.7 L384.0 203.5 L384.5 203.2 L385.0 203.0 L385.5 202.8 L386.0 202.6 L386.5 202.4 L387.0 202.2 L387.5 202.0 L388.0 201.8 L388.5 201.5 L389.0 201.3 L389.5 201.1 L390.0 200.9 L390.5 200.7 L391.0 200.6 L391.5 200.4 L392.0 200.3 L392.5 200.1 L393.0 200.0 L393.5 199.8 L394.0 199.7 L394.5 199.5 L395.0 199.4 L395.5 199.2 L396.0 199.0 L396.5 198.9 L397.0 198.8 L397.5 198.7 L398.0 198.7 L398.5 198.6 L399.0 198.5 L399.5 198.5 L400.0 198.4 L400.5 198.4 L401.0 198.3 L401.5 198.2 L402.0 198.2 L402.5 198.1 L403.0 198.1 L403.5 198.0 L404.0 197.9 L404.5 197.9 L405.0 197.8 L405.5 197.8 L406.0 197.7 L406.5 197.6 L407.0 197.6 L407.5 197.5 L408.0 197.5 L408.5 197.4 L409.0 197.4 L409.5 197.4 L410.0 197.4 L410.5 197.3 L411.0 197.3 L411.5 197.3 L412.0 197.3 L412.5 197.2 L413.0 197.2 L413.5 197.2 L414.0 197.1 L414.5 197.1 L415.0 197.1 L415.5 197.1 L416.0 197.0 L416.5 197.0 L417.0 197.0 L417.5 196.9 L418.0 196.9 L418.5 196.9 L419.0 196.9 L419.5 196.8 L420.0 196.8 L420.5 196.8 L421.0 196.7 L421.5 196.7 L422.0 196.7 L422.5 196.7 L423.0 196.6 L423.5 196.6 L424.0 196.6 L424.5 196.5 L425.0 196.5 L425.5 196.5 L426.0 196.5 L426.5 196.4 L427.0 196.4 L427.5 196.4 L428.0 196.4 L428.5 196.3 L429.0 196.3 L429.5 196.3 L430.0 196.2 L430.5 196.2 L431.0 196.2 L431.5 196.2 L432.0 196.1 L432.5 196.1 L433.0 196.1 L433.5 196.0 L434.0 196.0 L434.5 196.0 L435.0 196.0 L435.5 195.9 L436.0 195.9 L436.5 195.9 L437.0 195.8 L437.5 195.8 L438.0 195.8 L438.5 195.8 L439.0 195.7 L439.5 195.7 L440.0 195.7 L440.5 195.7 L441.0 195.6 L441.5 195.6 L442.0 195.6 L442.5 195.5 L443.0 195.5 L443.5 195.5 L444.0 195.5 L444.5 195.4 L445.0 195.4 L445.5 195.4 L446.0 195.4 L446.5 195.4 L447.0 195.4 L447.5 195.4 L448.0 195.4 L448.5 195.4 L449.0 195.4 L449.5 195.3 L450.0 195.3 L450.5 195.3 L451.0 195.3 L451.5 195.3 L452.0 195.3 L452.5 195.3 L453.0 195.3 L453.5 195.3 L454.0 195.3 L454.5 195.3 L455.0 195.3 L455.5 195.3 L456.0 195.3 L456.5 195.3 L457.0 195.3 L457.5 195.2 L458.0 195.2 L458.5 195.2 L459.0 195.2 L459.5 195.2 L460.0 195.2 L460.5 195.2 L461.0 195.2 L461.5 195.2 L462.0 195.2 L462.5 195.2 L463.0 195.2 L463.5 195.2 L464.0 195.2 L464.5 195.2 L465.0 195.2 L465.5 195.2 L466.0 195.1 L466.5 195.1 L467.0 195.1 L467.5 195.1 L468.0 195.1 L468.5 195.1 L469.0 195.1 L469.5 195.1 L470.0 195.1 L470.5 195.1 L471.0 195.1 L471.5 195.1 L472.0 195.1 L472.5 195.1 L473.0 195.1 L473.5 195.1 L474.0 195.1 L474.5 195.1 L475.0 195.1 L475.5 195.1 L476.0 195.1 L476.5 195.1 L477.0 195.1 L477.5 195.1 L478.0 195.1 L478.5 195.1 L479.0 195.1 L479.5 195.1 L480.0 195.1 L480.5 195.1 L481.0 195.1 L481.5 195.1 L482.0 195.1 L482.5 195.1 L483.0 195.1 L483.5 195.1 L484.0 195.1 L484.5 195.1 L485.0 195.1 L485.5 195.0 L486.0 195.0 L486.5 195.0 L487.0 195.0 L487.5 195.0 L488.0 195.0 L488.5 195.0 L489.0 195.0 L489.5 195.0 L490.0 195.0 L490.5 195.0 L491.0 195.0 L491.5 195.0 L492.0 195.0 L492.5 195.0 L493.0 195.0 L493.5 195.0 L494.0 195.0 L494.5 195.0 L495.0 195.0 L495.5 195.0 L496.0 195.0 L496.5 195.0 L497.0 195.0 L497.5 195.0 L498.0 195.0 L498.5 195.0 L499.0 195.0 L499.5 195.0 L500.0 195.0 L500.5 195.0 L501.0 195.0 L501.5 195.0 L502.0 195.0 L502.5 195.0 L503.0 195.0 L503.5 195.0 L504.0 195.0 L504.5 195.0 L505.0 195.0 L505.5 195.0 L506.0 195.0 L506.5 195.0 L507.0 195.0 L507.5 194.9 L508.0 194.9 L508.5 194.9 L509.0 194.9 L509.5 194.9 L510.0 194.9 L510.5 194.9 L511.0 194.9 L511.5 194.9 L512.0 194.9 L512.5 194.9 L513.0 194.9 L513.5 194.9 L514.0 194.9 L514.5 194.9 L515.0 194.9 L515.5 194.9 L516.0 194.9 L516.5 194.9 L517.0 194.9 L517.5 194.9 L518.0 194.9 L518.5 194.9 L519.0 194.9 L519.5 194.9 L520.0 194.9 L520.5 194.9 L521.0 194.9 L521.5 194.9 L522.0 194.9 L522.5 194.8 L523.0 194.8 L523.5 194.8 L524.0 194.8 L524.5 194.8 L525.0 194.8 L525.5 194.8 L526.0 194.8 L526.5 194.8 L527.0 194.8 L527.5 194.8 L528.0 194.8 L528.5 194.8 L529.0 194.8 L529.5 194.8 L530.0 194.8 L530.5 194.8 L531.0 194.8 L531.5 194.8 L532.0 194.8 L532.5 194.8 L533.0 194.8 L533.5 194.8 L534.0 194.8 L534.5 194.8 L535.0 194.8 L535.5 194.8 L536.0 194.8 L536.5 194.8 L537.0 194.8 L537.5 194.8 L538.0 194.7 L538.5 194.7 L539.0 194.7 L539.5 194.7 L540.0 194.7 L540.5 194.7 L541.0 194.7 L541.5 194.7 L542.0 194.7 L542.5 194.7 L543.0 194.7 L543.5 194.7 L544.0 194.7 L544.5 194.7 L545.0 194.7 L545.5 194.7 L546.0 194.7 L546.5 194.7 L547.0 194.7 L547.5 194.7 L548.0 194.7 L548.5 194.7 L549.0 194.7 L549.5 194.7 L550.0 194.7 L550.5 194.7 L551.0 194.7 L551.5 194.7 L552.0 194.7 L552.5 194.7 L553.0 194.6 L553.5 194.6 L554.0 194.6 L554.5 194.6 L555.0 194.6 L555.5 194.6 L556.0 194.6 L556.5 194.6 L557.0 194.6 L557.5 194.6 L558.0 194.6 L558.5 194.6 L559.0 194.6 L559.5 194.6 L560.0 194.6 L560.5 194.6 L561.0 194.6 L561.5 194.6 L562.0 194.6 L562.5 194.6 L563.0 194.6 L563.5 194.6 L564.0 194.6 L564.5 194.6 L565.0 194.6 L565.5 194.6 L566.0 194.6 L566.5 194.6 L567.0 194.6 L567.5 194.6 L568.0 194.6 L568.5 194.6 L569.0 194.6 L569.5 194.6 L570.0 194.6 L570.5 194.6 L571.0 194.6 L571.5 194.6 L572.0 194.6 L572.5 194.6 L573.0 194.6 L573.5 194.6 L574.0 194.6 L574.5 194.6 L575.0 194.6 L575.5 194.5 L576.0 194.5 L576.5 194.5 L577.0 194.5 L577.5 194.5 L578.0 194.5 L578.5 194.5 L579.0 194.5 L579.5 194.5 L580.0 194.5 L580.5 194.5 L581.0 194.5 L581.5 194.5 L582.0 194.5 L582.5 194.5 L583.0 194.5 L583.5 194.5 L584.0 194.5 L584.5 194.5 L585.0 194.5 L585.5 194.5 L586.0 194.5 L586.5 194.5 L587.0 194.5 L587.5 194.5 L588.0 194.5 L588.5 194.5 L589.0 194.5 L589.5 194.5 L590.0 194.5 L590.5 194.5 L591.0 194.5 L591.5 194.5 L592.0 194.5 L592.5 194.5 L593.0 194.5 L593.5 194.5 L594.0 194.5 L594.5 194.5 L595.0 194.5 L595.5 194.5 L596.0 194.5 L596.5 194.5 L597.0 194.5 L597.5 194.5 L598.0 194.5 L598.5 194.5 L599.0 194.5 L599.5 194.5 L600.0 194.5 L600.5 194.5 L601.0 194.5 L601.5 194.5 L602.0 194.5 L602.5 194.5 L603.0 194.5 L603.5 194.5 L604.0 194.5 L604.5 194.5 L605.0 194.4 L605.5 194.4 L606.0 194.4 L606.5 194.4 L607.0 194.4 L607.5 194.4 L608.0 194.4 L608.5 194.4 L609.0 194.4 L609.5 194.4 L610.0 194.4 L610.5 194.4 L611.0 194.4 L611.5 194.4 L612.0 194.4 L612.5 194.4 L613.0 194.4 L613.5 194.4 L614.0 194.4 L614.5 194.4 L615.0 194.4 L615.5 194.4 L616.0 194.4 L616.5 194.4 L617.0 194.4 L617.5 194.4 L618.0 194.4 L618.5 194.4 L619.0 194.4 L619.5 194.4 L620.0 194.4 L620.5 194.4 L621.0 194.4 L621.5 194.4 L622.0 194.4 L622.5 194.4 L623.0 194.4 L623.5 194.4 L624.0 194.4 L624.5 194.4 L625.0 194.4 L625.5 194.4 L626.0 194.4 L626.5 194.4 L627.0 194.4 L627.5 194.4 L628.0 194.4 L628.5 194.4 L629.0 194.4 L629.5 194.4 L630.0 194.4 L630.5 194.4 L631.0 194.4 L631.5 194.4 L632.0 194.4 L632.5 194.4 L633.0 194.4 L633.5 194.4 L634.0 194.4 L634.5 194.4 L635.0 194.4 L635.5 194.3 L636.0 194.3 L636.5 194.3 L637.0 194.3 L637.5 194.3 L638.0 194.3 L638.5 194.3 L639.0 194.3 L639.5 194.3 L640.0 194.3 L640.5 194.3 L641.0 194.3 L641.5 194.3 L642.0 194.3 L642.5 194.3 L643.0 194.3 L643.5 194.3 L644.0 194.3 L644.5 194.3 L645.0 194.3 L645.5 194.3 L646.0 194.3 L646.5 194.3 L647.0 194.3 L647.5 194.3 L648.0 194.3 L648.5 194.3 L649.0 194.3 L649.5 194.3 L650.0 194.3 L650.5 194.3 L651.0 194.3 L651.5 194.3 L652.0 194.3 L652.5 194.3 L653.0 194.3 L653.5 194.3 L654.0 194.3 L654.5 194.3 L655.0 194.3 L655.5 194.3 L656.0 194.3 L656.5 194.3 L657.0 194.3 L657.5 194.3 L658.0 194.3 L658.5 194.4 L659.0 194.4 L659.5 194.4 L660.0 194.4 L660.5 194.4 L661.0 194.4 L661.5 194.4 L662.0 194.4 L662.5 194.4 L663.0 194.4 L663.5 194.4 L664.0 194.4 L664.5 194.4 L665.0 194.4 L665.5 194.4 L666.0 194.4 L666.5 194.4 L667.0 194.4 L667.5 194.4 L668.0 194.4 L668.5 194.4 L669.0 194.4 L669.5 194.4 L670.0 194.4 L670.5 194.4 L671.0 194.4 L671.5 194.4 L672.0 194.4 L672.5 194.4 L673.0 194.4 L673.5 194.4 L674.0 194.4 L674.5 194.4 L675.0 194.4 L675.5 194.5 L676.0 194.5 L676.5 194.5 L677.0 194.5 L677.5 194.5 L678.0 194.5 L678.5 194.5 L679.0 194.5 L679.5 194.5 L680.0 194.5 L680.5 194.5 L681.0 194.5 L681.5 194.5 L682.0 194.5 L682.5 194.5 L683.0 194.5 L683.5 194.5 L684.0 194.5 L684.5 194.5 L685.0 194.5 L685.5 194.5 L686.0 194.5 L686.5 194.5 L687.0 194.5 L687.5 194.5 L688.0 194.5 L688.5 194.5 L689.0 194.5 L689.5 194.5 L690.0 194.5 L690.5 194.5 L691.0 194.5 L691.5 194.5 L692.0 194.6 L692.5 194.6 L693.0 194.6 L693.5 194.6 L694.0 194.6 L694.5 194.6 L695.0 194.6 L695.5 194.6 L696.0 194.6 L696.5 194.6 L697.0 194.6 L697.5 194.6 L698.0 194.6 L698.5 194.6 L699.0 194.6 L699.5 194.6 L700.0 194.6 L700.5 194.6 L701.0 194.6 L701.5 194.6 L702.0 194.6 L702.5 194.6 L703.0 194.6 L703.5 194.6 L704.0 194.6 L704.5 194.6 L705.0 194.6 L705.5 194.6 L706.0 194.6 L706.5 194.6 L707.0 194.6 L707.5 194.6 L708.0 194.6 L708.5 194.6 L709.0 194.6 L709.5 194.6 L710.0 194.7 L710.5 194.7 L711.0 194.7 L711.5 194.7 L712.0 194.7 L712.5 194.7 L713.0 194.7 L713.5 194.7 L714.0 194.7 L714.5 194.7 L715.0 194.7 L715.5 194.7 L716.0 194.7 L716.5 194.7 L717.0 194.7 L717.5 194.7 L718.0 194.7 L718.5 194.7 L719.0 194.7 L719.5 194.7 L720.0 194.7 L720.5 194.7 L721.0 194.7 L721.5 194.7 L722.0 194.7 L722.5 194.7 L723.0 194.7 L723.5 194.7 L724.0 194.7 L724.5 194.7 L725.0 194.7 L725.5 194.7 L726.0 194.7 L726.5 194.7 L727.0 194.7 L727.5 194.7 L728.0 194.7 L728.5 194.7 L729.0 194.7 L729.5 194.7 L730.0 194.8 L730.5 194.8 L731.0 194.8 L731.5 194.8 L732.0 194.8 L732.5 194.8 L733.0 194.8 L733.5 194.8 L734.0 194.8 L734.5 194.8 L735.0 194.8 L735.5 194.8 L736.0 194.8 L736.5 195.2 L737.0 195.2 L737.5 194.4 L738.0 194.4 L738.5 194.8 L739.0 194.4 L739.5 194.8 L740.0 194.8 L740.5 195.2 L741.0 195.2 L741.5 195.2 L742.0 195.2 L742.5 195.2 L743.0 194.4 L743.5 195.2 L744.0 194.4 L744.5 194.4 L745.0 194.8 L745.5 194.7 L746.0 195.1 L746.5 194.7 L747.0 194.3 L747.5 194.3 L748.0 195.1 L748.5 195.1 L749.0 194.3 L749.5 194.7 L750.0 194.3 L750.5 195.1 L751.0 194.7 L751.5 194.7 L752.0 194.3 L752.5 194.3 L753.0 194.3 L753.5 194.7 L754.0 195.1 L754.5 194.7 L755.0 195.1 L755.5 194.3 L756.0 195.0 L756.5 195.0 L757.0 195.0 L757.5 194.2 L758.0 194.6 L758.5 194.6 L759.0 194.2 L759.5 195.0 L760.0 194.6 L760.5 194.2 L761.0 194.6" fill="none" stroke="#c01818" stroke-width="1.2" stroke-linejoin="round"/></svg>
<span class="t" style="left:23.5px;top:115.5px;font-size:12px;color:#000;letter-spacing:-0.72px;">MHz</span>
<span class="t" style="left:93.64px;top:130.8px;font-size:12px;color:#000;letter-spacing:0.60px;">1.0</span>
<span class="t" style="left:153.19px;top:115.5px;font-size:12px;color:#000;letter-spacing:0.60px;">2.0</span>
<span class="t" style="left:212.74px;top:130.8px;font-size:12px;color:#000;letter-spacing:0.60px;">3.0</span>
<span class="t" style="left:272.29px;top:115.5px;font-size:12px;color:#000;letter-spacing:0.60px;">4.0</span>
<span class="t" style="left:331.84px;top:130.8px;font-size:12px;color:#000;letter-spacing:0.60px;">5.0</span>
<span class="t" style="left:391.39px;top:115.5px;font-size:12px;color:#000;letter-spacing:0.60px;">6.0</span>
<span class="t" style="left:450.94px;top:130.8px;font-size:12px;color:#000;letter-spacing:0.60px;">7.0</span>
<span class="t" style="left:510.49px;top:115.5px;font-size:12px;color:#000;letter-spacing:0.60px;">8.0</span>
<span class="t" style="left:570.04px;top:130.8px;font-size:12px;color:#000;letter-spacing:0.60px;">9.0</span>
<span class="t" style="left:629.59px;top:115.5px;font-size:12px;color:#000;letter-spacing:0.41px;">10.0</span>
<span class="t" style="left:689.14px;top:130.8px;font-size:12px;color:#000;letter-spacing:0.63px;">11.0</span>
<span class="t" style="left:748.69px;top:115.5px;font-size:12px;color:#000;letter-spacing:0.41px;">12.0</span>
<span class="t" style="left:27px;top:140.5px;font-size:12px;color:#000;letter-spacing:0.57px;">10</span>
<span class="t" style="left:768.5px;top:140.5px;font-size:12px;color:#000;letter-spacing:0.32px;">10</span>
<span class="t" style="left:30.2px;top:183.8px;font-size:12px;color:#000;">0</span>
<span class="t" style="left:771.5px;top:183.8px;font-size:12px;color:#000;">0</span>
<span class="t" style="left:23.3px;top:226.6px;font-size:12px;color:#000;letter-spacing:0.39px;">-10</span>
<span class="t" style="left:763.8px;top:226.6px;font-size:12px;color:#000;letter-spacing:0.39px;">-10</span>
<span class="t" style="left:23.3px;top:269.4px;font-size:12px;color:#000;letter-spacing:0.39px;">-20</span>
<span class="t" style="left:763.8px;top:269.4px;font-size:12px;color:#000;letter-spacing:0.39px;">-20</span>
<span class="t" style="left:23.3px;top:312.2px;font-size:12px;color:#000;letter-spacing:0.39px;">-30</span>
<span class="t" style="left:763.8px;top:312.2px;font-size:12px;color:#000;letter-spacing:0.39px;">-30</span>
<span class="t" style="left:23.3px;top:355px;font-size:12px;color:#000;letter-spacing:0.39px;">-40</span>
<span class="t" style="left:763.8px;top:355px;font-size:12px;color:#000;letter-spacing:0.39px;">-40</span>
<span class="t" style="left:23.3px;top:397.8px;font-size:12px;color:#000;letter-spacing:0.39px;">-50</span>
<span class="t" style="left:763.8px;top:397.8px;font-size:12px;color:#000;letter-spacing:0.39px;">-50</span>
<span class="t" style="left:23.3px;top:440.6px;font-size:12px;color:#000;letter-spacing:0.39px;">-60</span>
<span class="t" style="left:763.8px;top:440.6px;font-size:12px;color:#000;letter-spacing:0.39px;">-60</span>
<span class="t" style="left:23.3px;top:483.4px;font-size:12px;color:#000;letter-spacing:0.39px;">-70</span>
<span class="t" style="left:763.8px;top:483.4px;font-size:12px;color:#000;letter-spacing:0.39px;">-70</span>
<span class="t" style="left:23.3px;top:526.2px;font-size:12px;color:#000;letter-spacing:0.39px;">-80</span>
<span class="t" style="left:763.8px;top:526.2px;font-size:12px;color:#000;letter-spacing:0.39px;">-80</span>
<span class="t" style="left:23.3px;top:569px;font-size:12px;color:#000;letter-spacing:0.39px;">-90</span>
<span class="t" style="left:763.8px;top:569px;font-size:12px;color:#000;letter-spacing:0.39px;">-90</span>
<span class="t" style="left:26.2px;top:158.5px;font-size:12px;color:#000;letter-spacing:-0.04px;">dB</span>
<span class="t" style="left:772.2px;top:158.5px;font-size:12px;color:#000;letter-spacing:-0.04px;">dB</span>
<span class="t" style="left:340.5px;top:586px;font-size:12px;color:#000;letter-spacing:-0.07px;">X-Raster: 1.0 MHz</span>
<div class="edit" style="left:806px;top:114px;width:100px;height:20px;"></div>
<div class="edit" style="left:806px;top:134px;width:100px;height:20px;"></div>
<div class="edit dis" style="left:806px;top:154px;width:100px;height:20px;"></div>
<div class="edit" style="left:806px;top:174px;width:100px;height:20px;"></div>
<div class="edit" style="left:856px;top:194px;width:50px;height:20px;"></div>
<span class="t" style="left:809.5px;top:117px;font-size:11px;color:#000;letter-spacing:-0.04px;">200000</span>
<span class="t" style="left:809.5px;top:137px;font-size:11px;color:#000;letter-spacing:-0.06px;">12000097</span>
<span class="t" style="left:809.5px;top:157px;font-size:11px;color:#79776b;letter-spacing:0.00px;">5903</span>
<span class="t" style="left:809.5px;top:177px;font-size:11px;color:#000;letter-spacing:0.00px;">2000</span>
<span class="t" style="left:860px;top:197px;font-size:11px;color:#000;">0</span>
<span class="t" style="left:910.5px;top:117px;font-size:11px;color:#000;letter-spacing:-0.03px;">Hz Anfang</span>
<span class="t" style="left:910.5px;top:137px;font-size:11px;color:#000;letter-spacing:-0.39px;">Hz Ende</span>
<span class="t" style="left:910.5px;top:157px;font-size:11px;color:#000;letter-spacing:-0.12px;">Hz Weite</span>
<span class="t" style="left:910.5px;top:177px;font-size:11px;color:#000;letter-spacing:-0.18px;">Messpunkte</span>
<span class="t" style="left:910.5px;top:197px;font-size:11px;color:#000;letter-spacing:-0.09px;">Displ.Shift</span>
<div style="left:806px;top:199px;width:40px;height:10px;border:1px solid #8a8a8a;border-radius:3px;background:#fff;box-shadow:inset 0 1px 1px #c8c8c8;"></div>
<div style="left:810px;top:202px;width:8px;height:4px;background:linear-gradient(to bottom,#a4eca4,#35d435 50%,#86e686);"></div>
<div style="left:820px;top:202px;width:8px;height:4px;background:linear-gradient(to bottom,#a4eca4,#35d435 50%,#86e686);"></div>
<div style="left:830px;top:202px;width:8px;height:4px;background:linear-gradient(to bottom,#a4eca4,#35d435 50%,#86e686);"></div>
<div style="left:840px;top:202px;width:2px;height:4px;background:linear-gradient(to bottom,#a4eca4,#35d435 50%,#86e686);"></div>
<div class="cb" style="left:807px;top:224px"><svg style="left:1px;top:1px" width="9" height="9" viewBox="0 0 9 9"><path d="M1.2 3.6 L3.5 6 L7.8 1.6" fill="none" stroke="#2a9e2a" stroke-width="2.3"/></svg></div>
<span class="t" style="left:825.5px;top:224px;font-size:11px;color:#b01010;letter-spacing:-0.07px;">AD8307intern</span>
<div class="cb dis" style="left:807px;top:242px;width:13px;height:13px;"></div>
<span class="t" style="left:825.5px;top:242px;font-size:11px;color:#000;letter-spacing:-0.06px;">AD8307externK2</span>
<div class="edit" style="left:806px;top:264px;width:80px;height:20px;"></div>
<div class="arrow" style="left:870px;top:266px;width:14px;height:16px;"><svg style="left:2px;top:4px" width="9" height="7" viewBox="0 0 9 7"><path d="M1 1.2 L4.5 4.8 L8 1.2" fill="none" stroke="#4d6185" stroke-width="2.2"/></svg></div>
<span class="t" style="left:810.2px;top:267px;font-size:11px;color:#000;letter-spacing:-0.80px;">0dB</span>
<span class="t" style="left:890.5px;top:267px;font-size:11px;color:#000;letter-spacing:-0.21px;">Daempfungsglied</span>
<div class="edit" style="left:806px;top:289px;width:200px;height:323px;"></div>
<span class="t" style="left:810.5px;top:292px;font-size:11px;color:#000;letter-spacing:-0.47px;">Kanal 1</span>
<span class="t" style="left:810.5px;top:306px;font-size:11px;color:#000;letter-spacing:-0.15px;">max:0.19dB 1.032323MHz</span>
<span class="t" style="left:810.5px;top:320px;font-size:11px;color:#000;letter-spacing:-0.17px;">min:-18.46dB 5.264774MHz</span>
<span class="t" style="left:810.5px;top:334px;font-size:11px;color:#000;letter-spacing:-0.19px;">B3db: keine</span>
<span class="t" style="left:810.5px;top:348px;font-size:11px;color:#000;letter-spacing:-0.13px;">B3db_inv: 64.933 kHz</span>
<span class="t" style="left:810.5px;top:362px;font-size:11px;color:#000;letter-spacing:0.05px;">Q_inv: 81.22</span>
<div style="left:771px;top:374px;width:226px;height:93px;border:1px solid #000;background:#ffffe1;box-shadow:2px 2px 2px rgba(0,0,0,.55);"></div>
<span class="t" style="left:776px;top:378px;font-size:11px;color:#000;letter-spacing:0.47px;font-weight:bold;">Infofenster</span>
<span class="t" style="left:776px;top:392px;font-size:11px;color:#000;letter-spacing:-0.05px;">wird benutzt fuer Darstellung verschiedener</span>
<span class="t" style="left:776px;top:406px;font-size:11px;color:#000;letter-spacing:-0.12px;">Textausgaben</span>
<span class="t" style="left:776px;top:420px;font-size:11px;color:#000;letter-spacing:-0.07px;">beim <i>Wobbeln.</i> Leider ist das Infofenster</span>
<span class="t" style="left:776px;top:434px;font-size:11px;color:#000;letter-spacing:-0.25px;">nicht</span>
<span class="t" style="left:776px;top:448px;font-size:11px;color:#000;letter-spacing:0.06px;">editierbar.</span>
<div class="btn" style="left:23px;top:625px;width:78px;height:33px;"></div>
<span class="t" style="left:41px;top:634.5px;font-size:11px;color:#000;letter-spacing:-0.17px;">Wobbeln</span>
<div class="btn" style="left:108px;top:625px;width:78px;height:33px;"></div>
<span class="t" style="left:131.5px;top:634.5px;font-size:11px;color:#000;letter-spacing:-0.44px;">Einmal</span>
<div class="btn dis" style="left:193px;top:625px;width:78px;height:33px;"></div>
<span class="t" style="left:220.5px;top:634.5px;font-size:11px;color:#79776b;letter-spacing:-0.16px;">Stop</span>
<div class="btn dis" style="left:203px;top:663px;width:27px;height:18px;"></div>
<span class="t" style="left:212.3px;top:664.6px;font-size:14px;color:#8a887e;">+</span>
<div class="btn dis" style="left:233px;top:663px;width:28px;height:18px;"></div>
<span class="t" style="left:244.6px;top:665px;font-size:13px;color:#8a887e;">-</span>
<span class="t" style="left:51px;top:667px;font-size:11px;color:#6f6f6f;letter-spacing:-0.11px;">Frequenzzoom 2-fach</span>
<div class="cb" style="left:283px;top:625px"><svg style="left:1px;top:1px" width="9" height="9" viewBox="0 0 9 9"><path d="M1.2 3.6 L3.5 6 L7.8 1.6" fill="none" stroke="#2a9e2a" stroke-width="2.3"/></svg></div>
<span class="t" style="left:301.5px;top:625px;font-size:11px;color:#000;letter-spacing:-0.09px;">Bandbreite 3dB/Q</span>
<div class="cb" style="left:418px;top:625px"><svg style="left:1px;top:1px" width="9" height="9" viewBox="0 0 9 9"><path d="M1.2 3.6 L3.5 6 L7.8 1.6" fill="none" stroke="#2a9e2a" stroke-width="2.3"/></svg></div>
<span class="t" style="left:436.5px;top:625px;font-size:11px;color:#000;letter-spacing:0.03px;">Grafik</span>
<div class="cb" style="left:283px;top:645px;width:13px;height:13px;"></div>
<span class="t" style="left:301.5px;top:645px;font-size:11px;color:#000;letter-spacing:-0.16px;">Bandbreite 6dB/60dB/Shape</span>
<span class="t" style="left:282px;top:665px;font-size:11px;color:#000;letter-spacing:-0.32px;">Shift K1</span>
<span class="t" style="left:341.5px;top:665px;font-size:11px;color:#000;letter-spacing:-0.26px;">K2 (dB)</span>
<span class="t" style="left:401px;top:665px;font-size:11px;color:#000;letter-spacing:0.18px;">Kursor #</span>
<div class="edit" style="left:282px;top:682px;width:50px;height:20px;"></div>
<div class="arrow" style="left:316px;top:684px;width:14px;height:16px;"><svg style="left:2px;top:4px" width="9" height="7" viewBox="0 0 9 7"><path d="M1 1.2 L4.5 4.8 L8 1.2" fill="none" stroke="#4d6185" stroke-width="2.2"/></svg></div>
<span class="t" style="left:286.2px;top:685px;font-size:11px;color:#000;">0</span>
<div class="edit" style="left:342px;top:682px;width:50px;height:20px;"></div>
<div class="arrow" style="left:376px;top:684px;width:14px;height:16px;"><svg style="left:2px;top:4px" width="9" height="7" viewBox="0 0 9 7"><path d="M1 1.2 L4.5 4.8 L8 1.2" fill="none" stroke="#4d6185" stroke-width="2.2"/></svg></div>
<span class="t" style="left:346.2px;top:685px;font-size:11px;color:#000;">0</span>
<div class="edit" style="left:402px;top:682px;width:50px;height:20px;"></div>
<div class="arrow" style="left:436px;top:684px;width:14px;height:16px;"><svg style="left:2px;top:4px" width="9" height="7" viewBox="0 0 9 7"><path d="M1 1.2 L4.5 4.8 L8 1.2" fill="none" stroke="#4d6185" stroke-width="2.2"/></svg></div>
<span class="t" style="left:406.2px;top:685px;font-size:11px;color:#000;">1</span>
<span class="t" style="left:491.5px;top:625px;font-size:11px;color:#000;letter-spacing:0.03px;">Betriebsart</span>
<div class="edit" style="left:492px;top:642px;width:100px;height:20px;"></div>
<div class="arrow" style="left:576px;top:644px;width:14px;height:16px;"><svg style="left:2px;top:4px" width="9" height="7" viewBox="0 0 9 7"><path d="M1 1.2 L4.5 4.8 L8 1.2" fill="none" stroke="#4d6185" stroke-width="2.2"/></svg></div>
<span class="t" style="left:495.4px;top:645px;font-size:11px;color:#000;letter-spacing:-0.25px;">Wobbeln</span>
<span class="t" style="left:601.5px;top:625px;font-size:11px;color:#79776b;letter-spacing:-0.30px;">Aufloesung SWV</span>
<div class="edit dis" style="left:602px;top:642px;width:130px;height:20px;"></div>
<div style="left:716px;top:644px;width:14px;height:16px;border:1px solid #e3e1d5;border-radius:2px;background:#f1efe6;"><svg style="left:2px;top:4px" width="9" height="7" viewBox="0 0 9 7"><path d="M1 1.2 L4.5 4.8 L8 1.2" fill="none" stroke="#c4c2b5" stroke-width="2.2"/></svg></div>
<span class="t" style="left:605.4px;top:645px;font-size:11px;color:#7d7a6c;letter-spacing:0.07px;">default</span>
<span class="t" style="left:491.5px;top:666px;font-size:11px;color:#79776b;letter-spacing:-0.14px;">Daempfung (100m)</span>
<span class="t" style="left:621.5px;top:666px;font-size:11px;color:#79776b;letter-spacing:-0.18px;">Kabellaenge (m)</span>
<div class="edit dis" style="left:492px;top:682px;width:120px;height:20px;"></div>
<div class="edit dis" style="left:622px;top:682px;width:110px;height:20px;"></div>
<svg style="left:0;top:0" width="1024" height="742" shape-rendering="crispEdges"><rect x="1021" y="727" width="2" height="2" fill="#fff"/><rect x="1020" y="726" width="2" height="2" fill="#b8b4a4"/><rect x="1017" y="731" width="2" height="2" fill="#fff"/><rect x="1016" y="730" width="2" height="2" fill="#b8b4a4"/><rect x="1021" y="731" width="2" height="2" fill="#fff"/><rect x="1020" y="730" width="2" height="2" fill="#b8b4a4"/><rect x="1013" y="735" width="2" height="2" fill="#fff"/><rect x="1012" y="734" width="2" height="2" fill="#b8b4a4"/><rect x="1017" y="735" width="2" height="2" fill="#fff"/><rect x="1016" y="734" width="2" height="2" fill="#b8b4a4"/><rect x="1021" y="735" width="2" height="2" fill="#fff"/><rect x="1020" y="734" width="2" height="2" fill="#b8b4a4"/></svg>
<div style="left:0px;top:737px;width:1024px;height:1px;background:#f9f8f0;"></div>
<div style="left:0px;top:738px;width:1024px;height:4px;background:linear-gradient(to bottom,#2a5fc6 0,#3a80e8 1px,#3f8af0 2px,#3a82ea 4px);"></div>
<div style="left:0px;top:738px;width:96px;height:4px;background:linear-gradient(to right,rgba(0,0,0,0) 0,rgba(0,0,0,0) 80px,rgba(20,80,20,.35) 96px),linear-gradient(to bottom,#2f7b33 0,#52a352 1px,#62b462 2px,#5aad5a 4px);"></div>
<div style="left:914px;top:738px;width:110px;height:4px;background:linear-gradient(to bottom,#1673c8 0,#20a2f2 1px,#1fa6f6 2px,#1a9cee 4px);border-left:1px solid #0f5fc0;"></div>
</div>
</body></html>
